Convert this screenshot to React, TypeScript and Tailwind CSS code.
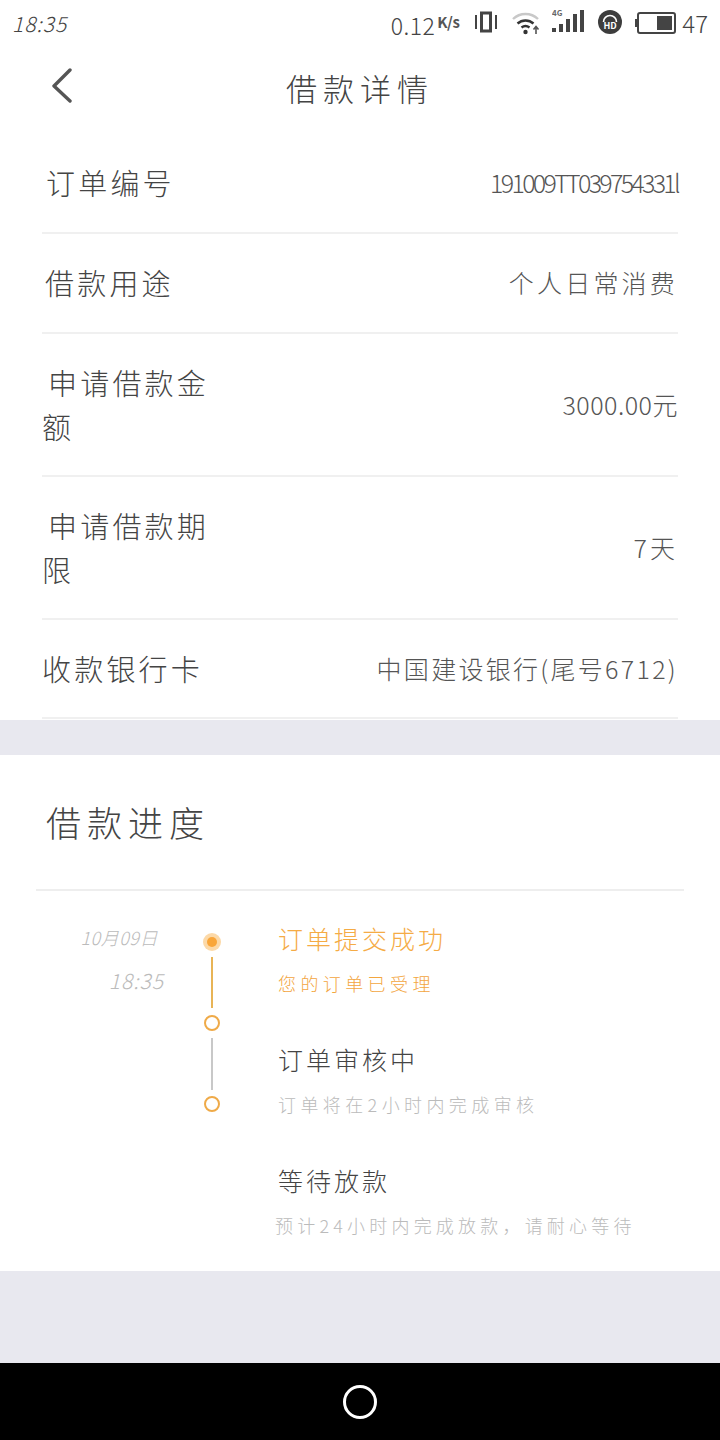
const font = { fontFamily: '"Noto Sans CJK SC", "Noto Sans", sans-serif' };

const rows = [
  { label: '订单编号', value: '191009TT039754331l', height: 'h-[100px]', indent: 'indent-[4px]', track: 'tracking-[-2.7px]' },
  { label: '借款用途', value: '个人日常消费', height: 'h-[100px]', indent: 'indent-[3px]', track: 'tracking-[3.2px]' },
  { label: '申请借款金额', value: '3000.00元', height: 'h-[143px]', indent: 'indent-[6px]', track: 'tracking-[0.5px]' },
  { label: '申请借款期限', value: '7天', height: 'h-[143px]', indent: 'indent-[6px]', track: 'tracking-[3px]' },
  { label: '收款银行卡', value: '中国建设银行(尾号6712)', height: 'h-[99px]', indent: 'indent-[0px]', track: 'tracking-[2.3px]' },
];

const steps = [
  { title: '订单提交成功', note: '您的订单已受理', titleClass: 'text-[#f5ab45]', noteClass: 'text-[#f3a63f]', noteTrack: 'tracking-[4.4px]', noteShift: 'ml-0' },
  { title: '订单审核中', note: '订单将在2小时内完成审核', titleClass: 'text-[#444444]', noteClass: 'text-[#bbbbbb]', noteTrack: 'tracking-[4.4px]', noteShift: 'ml-0' },
  { title: '等待放款', note: '预计24小时内完成放款\uFF0C请耐心等待', titleClass: 'text-[#444444]', noteClass: 'text-[#bbbbbb]', noteTrack: 'tracking-[4.2px]', noteShift: '-ml-[3px]' },
];

function StatusBar() {
  return (
    <div className="h-12 flex items-center justify-between pl-3 pr-3 text-[#444444]">
      <span className="text-[21px] font-light italic tracking-[1px] leading-none -mt-[2px]">18:35</span>
      <div className="flex items-center">
        <span className="text-[23px] font-light tracking-[0.5px] leading-none mt-[2px]">0.12</span>
        <span className="text-[15px] font-bold text-[#555555] leading-none mb-[6px] ml-[2px] w-[25px] tracking-[-0.5px]">K/s</span>
        <svg width="22" height="22" viewBox="0 0 22 22" className="ml-[13px] -mt-[4px]">
          <rect x="6.5" y="2" width="9" height="18" fill="none" stroke="#444" strokeWidth="3" />
          <rect x="0" y="4" width="2" height="14" fill="#444" />
          <rect x="20" y="4" width="2" height="14" fill="#444" />
        </svg>
        <svg width="28" height="24" viewBox="0 0 28 24" className="ml-[15px] -mt-[2px]">
          <path d="M1 8 A 18 18 0 0 1 26 8" fill="none" stroke="#c8c8c8" strokeWidth="2.4" />
          <path d="M5.5 12.5 A 12 12 0 0 1 21.5 12.5" fill="none" stroke="#333" strokeWidth="2.4" />
          <path d="M9.5 16.5 A 6.5 6.5 0 0 1 17.5 16.5" fill="none" stroke="#333" strokeWidth="2.4" />
          <circle cx="13.5" cy="21" r="2.2" fill="#333" />
          <path d="M24 23 V16 M21.5 18.5 L24 15.5 L26.5 18.5" fill="none" stroke="#555" strokeWidth="1.6" />
        </svg>
        <svg width="34" height="28" viewBox="0 -4 34 28" className="ml-[12px] -mt-[10px]">
          <text x="0" y="7" fontSize="8" fontWeight="700" fill="#666">4G</text>
          <rect x="0" y="19" width="4" height="4" fill="#444" />
          <rect x="7" y="15" width="4" height="8" fill="#444" />
          <rect x="14" y="10" width="4" height="13" fill="#444" />
          <rect x="21" y="5" width="4" height="18" fill="#444" />
          <rect x="28" y="1" width="4" height="22" fill="#444" />
        </svg>
        <svg width="24" height="24" viewBox="0 0 24 24" className="ml-[12px] -mt-[4px]">
          <circle cx="12" cy="12" r="12" fill="#3d3d3d" />
          <path d="M5.5 12 A 6.5 6.5 0 0 1 18.5 12" fill="none" stroke="#fff" strokeWidth="1.6" />
          <text x="12" y="19" textAnchor="middle" fontSize="9" fontWeight="700" fill="#fff">HD</text>
        </svg>
        <svg width="41" height="22" viewBox="0 0 41 22" className="ml-[13px] -mt-[2px]">
          <rect x="0" y="7" width="2" height="8" fill="#444" />
          <rect x="3" y="1" width="37" height="20" rx="2" fill="none" stroke="#444" strokeWidth="2" />
          <rect x="22" y="4" width="15" height="14" fill="#444" />
        </svg>
        <span className="text-[24px] font-light leading-none ml-[6px] -mt-[2px]">47</span>
      </div>
    </div>
  );
}

function Timeline() {
  return (
    <div className="flex flex-col items-center w-[18px] shrink-0">
      <div className="w-[18px] h-[18px] rounded-full bg-[#fcd9a8] flex items-center justify-center shrink-0">
        <div className="w-[10px] h-[10px] rounded-full bg-[#f9a63a]" />
      </div>
      <div className="w-[2px] h-[51px] bg-[#e8b456] mt-[6px] shrink-0" />
      <div className="w-[16px] h-[16px] rounded-full border-2 border-[#efaa48] mt-[7px] shrink-0" />
      <div className="w-[2px] h-[52px] bg-[#c8c8c8] mt-[7px] shrink-0" />
      <div className="w-[16px] h-[16px] rounded-full border-2 border-[#efaa48] mt-[6px] shrink-0" />
    </div>
  );
}

export default function App() {
  return (
    <div className="w-[720px] h-[1440px] flex flex-col bg-[#e8e8ef] overflow-hidden" style={font}>
      <div className="bg-white h-[720px] shrink-0">
        <StatusBar />
        <div className="h-[86px] flex items-center relative">
          <svg width="24" height="36" viewBox="0 0 24 36" className="absolute left-[50px] top-[20px]">
            <path d="M20 2 L4 18 L20 33" fill="none" stroke="#555555" strokeWidth="3.4" strokeLinecap="round" strokeLinejoin="round" />
          </svg>
          <h1 className="w-full text-center text-[31px] font-light text-[#444444] tracking-[6px] -mt-[5px]">借款详情</h1>
        </div>
        <div className="mx-[42px]">
          {rows.map((row) => (
            <div key={row.label} className={`${row.height} flex items-center justify-between border-b-2 border-[#f0f0f0]`}>
              <span className={`w-[172px] text-[29px] font-light text-[#444444] tracking-[3.2px] leading-[44px] -mt-[2px] ${row.indent}`}>{row.label}</span>
              <span className={`text-[25px] font-light text-[#555555] whitespace-nowrap ${row.track}`}>{row.value}</span>
            </div>
          ))}
        </div>
      </div>

      <div className="mt-[35px] bg-white h-[516px] shrink-0">
        <div className="mx-[36px] h-[136px] border-b-2 border-[#eeeeee] flex items-center pl-[10px]">
          <h2 className="text-[35px] font-light text-[#444444] tracking-[6px]">借款进度</h2>
        </div>
        <div className="flex pt-[42px]">
          <div className="w-[164px] shrink-0 flex flex-col items-end text-[#bbbbbb] font-light italic -mt-[10px]">
            <span className="text-[18px] leading-[28px] pr-[6px] tracking-[0.5px]">10月09日</span>
            <span className="text-[21px] leading-[28px] mt-[15px] tracking-[1px]">18:35</span>
          </div>
          <div className="w-[96px] shrink-0 flex justify-center">
            <Timeline />
          </div>
          <div className="flex flex-col -mt-[15px] ml-[18px]">
            {steps.map((step) => (
              <div key={step.title} className="h-[121px] shrink-0">
                <div className={`text-[25px] font-light leading-[40px] tracking-[3px] ${step.titleClass}`}>{step.title}</div>
                <div className={`text-[18px] font-light leading-[26px] mt-[12px] whitespace-nowrap ${step.noteTrack} ${step.noteClass} ${step.noteShift}`}>{step.note}</div>
              </div>
            ))}
          </div>
        </div>
      </div>

      <div className="h-[92px] shrink-0" />
      <div className="h-[77px] bg-black flex items-center justify-center shrink-0">
        <div className="w-[34px] h-[34px] rounded-full border-[3px] border-white" />
      </div>
    </div>
  );
}
